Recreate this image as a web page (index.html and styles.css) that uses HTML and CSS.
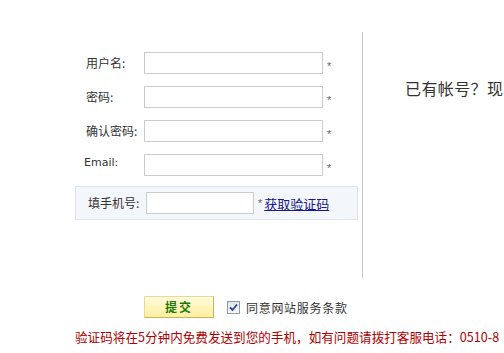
FILE: index.html
```html
<!DOCTYPE html>
<html lang="zh-CN">
<head>
<meta charset="utf-8">
<title>注册</title>
<link rel="stylesheet" href="styles.css">
</head>
<body>
<div class="main">
  <div class="left">
    <div class="row"><label class="lbl">用户名:</label><input class="inp" type="text"><span class="req">*</span></div>
    <div class="row"><label class="lbl">密码:</label><input class="inp" type="password"><span class="req">*</span></div>
    <div class="row"><label class="lbl">确认密码:</label><input class="inp" type="password"><span class="req">*</span></div>
    <div class="row"><label class="lbl lbl-en">Email:</label><input class="inp" type="text"><span class="req">*</span></div>
    <div class="phone">
      <label class="lbl">填手机号:</label><input class="inp inp-phone" type="text"><span class="req req-phone">*</span><a class="getcode" href="#">获取验证码</a>
    </div>
  </div>
  <div class="right">已有帐号？现</div>
</div>
<div class="actions">
  <button class="submit" type="button">提交</button>
  <span class="check"><svg width="9" height="9" viewBox="0 0 9 9"><path d="M1 4.5 L3.5 7 L8 1.5" fill="none" stroke="#27458f" stroke-width="1.8"/></svg></span>
  <span class="agree">同意网站服务条款</span>
</div>
<div class="notice">验证码将在5分钟内免费发送到您的手机，如有问题请拨打客服电话：0510-8</div>
</body>
</html>
```

FILE: styles.css
```css
html, body {
  margin: 0;
  padding: 0;
  background: #fff;
  overflow: hidden;
}
body {
  width: 504px;
  height: 353px;
  font-family: "Noto Sans CJK SC", "Liberation Sans", sans-serif;
  font-size: 12px;
  color: #333;
  white-space: nowrap;
}
.main {
  display: flex;
  margin-left: 75px;
  padding-top: 32px;
}
.left {
  flex: none;
  width: 288px;
  height: 246px;
  box-sizing: border-box;
  border-right: 1px solid #c8c8c8;
  padding-top: 20px;
}
.row {
  display: flex;
  align-items: center;
  height: 22px;
  margin-bottom: 12px;
  padding-left: 11px;
}
.row:nth-child(4) { margin-bottom: 10px; }
.lbl {
  width: 58px;
  flex: none;
  font-size: 12px;
  line-height: 14px;
  color: #333;
}
.lbl-en {
  font-family: "DejaVu Sans", "Liberation Sans", sans-serif;
  font-size: 11px;
  margin-left: -2px;
  width: 60px;
  position: relative;
  top: -2px;
}
.inp {
  width: 179px;
  height: 22px;
  box-sizing: border-box;
  border: 1px solid #cbcbcb;
  background: #fff;
  margin: 0;
  padding: 0 3px;
  flex: none;
  outline: none;
}
.req {
  margin-left: 4px;
  font-family: "Liberation Sans", sans-serif;
  font-size: 11px;
  color: #666;
  position: relative;
  top: 3px;
}
.phone {
  display: flex;
  align-items: center;
  width: 283px;
  height: 34px;
  box-sizing: border-box;
  border: 1px solid #dfe5ee;
  background: #f3f6fb;
  padding-left: 12px;
}
.inp-phone { width: 108px; }
.req-phone { top: 0; margin-left: 4px; }
.getcode {
  margin-left: 2px;
  color: #161690;
  text-decoration: underline;
  font-size: 13px;
}
.right {
  padding-left: 42px;
  padding-top: 46px;
  font-size: 16px;
  line-height: 20px;
  letter-spacing: 0.4px;
  color: #333;
}
.actions {
  display: flex;
  align-items: center;
  margin-left: 144px;
  margin-top: 18px;
  height: 22px;
}
.submit {
  width: 70px;
  height: 22px;
  margin: 0;
  padding: 0;
  box-sizing: border-box;
  border: 1px solid #e8d89a;
  border-right-color: #c9b05a;
  border-bottom-color: #c9b05a;
  background: linear-gradient(#fffbdc, #ffef9f);
  color: #1f7a0a;
  font-family: "Noto Sans CJK SC", sans-serif;
  font-weight: bold;
  font-size: 12px;
  letter-spacing: 2px;
  line-height: 20px;
}
.check {
  display: inline-flex;
  align-items: center;
  justify-content: center;
  width: 13px;
  height: 13px;
  box-sizing: border-box;
  border: 1px solid #8f9aa8;
  background: linear-gradient(#e2e6ec, #f6f7f9);
  margin-left: 13px;
}
.agree {
  margin-left: 6px;
  font-size: 12px;
  letter-spacing: 0.7px;
  color: #333;
}
.notice {
  margin-left: 75px;
  margin-top: 11px;
  font-size: 12.6px;
  line-height: 16px;
  color: #b00000;
}
```
